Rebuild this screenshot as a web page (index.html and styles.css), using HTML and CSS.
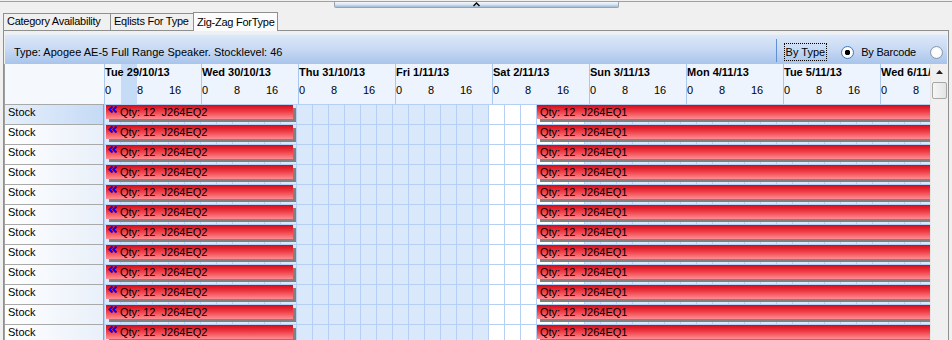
FILE: index.html
```html
<!DOCTYPE html>
<html lang="en">
<head>
    <meta charset="UTF-8">
    <title>Zig-Zag ForType</title>
    <link rel="stylesheet" href="styles.css">
</head>
<body>

    <div class="splitter">
        <div class="grip">
            <svg width="7" height="5" viewBox="0 0 7 5"><path d="M0.5 4 L3.5 1 L6.5 4" fill="none" stroke="#000" stroke-width="1.4"/></svg>
        </div>
    </div>

    <div class="tabs">
        <div class="tab tab-cat">Category Availability</div>
        <div class="tab tab-eq">Eqlists For Type</div>
        <div class="tab tab-zig active">Zig-Zag ForType</div>
    </div>

    <div class="panel">
        <div class="infobar">
            <span class="type">Type: Apogee AE-5 Full Range Speaker. Stocklevel: 46</span>
            <div class="modes">
                <span class="sep"></span>
                <span class="focus">By Type</span>
                <span class="radio on"></span>
                <span class="mode-label">By Barcode</span>
                <span class="radio"></span>
            </div>
        </div>

        <div class="chart">
            <div class="corner"></div>

            <div class="timehead">
                <div class="day now"><div class="date">Tue 29/10/13</div><div class="hours"><span>0</span><span>8</span><span>16</span></div></div>
                <div class="day"><div class="date">Wed 30/10/13</div><div class="hours"><span>0</span><span>8</span><span>16</span></div></div>
                <div class="day"><div class="date">Thu 31/10/13</div><div class="hours"><span>0</span><span>8</span><span>16</span></div></div>
                <div class="day"><div class="date">Fri 1/11/13</div><div class="hours"><span>0</span><span>8</span><span>16</span></div></div>
                <div class="day"><div class="date">Sat 2/11/13</div><div class="hours"><span>0</span><span>8</span><span>16</span></div></div>
                <div class="day"><div class="date">Sun 3/11/13</div><div class="hours"><span>0</span><span>8</span><span>16</span></div></div>
                <div class="day"><div class="date">Mon 4/11/13</div><div class="hours"><span>0</span><span>8</span><span>16</span></div></div>
                <div class="day"><div class="date">Tue 5/11/13</div><div class="hours"><span>0</span><span>8</span><span>16</span></div></div>
                <div class="day"><div class="date">Wed 6/11/13</div><div class="hours"><span>0</span><span>8</span><span>16</span></div></div>
            </div>

            <div class="vscroll">
                <div class="arrow">
                    <svg width="7" height="4" viewBox="0 0 7 4"><path d="M0 4 L3.5 0 L7 4 Z" fill="#222"/></svg>
                </div>
                <div class="thumb"></div>
            </div>

            <div class="rowheads">
                <div class="rowhead selected">Stock</div>
                <div class="rowhead">Stock</div>
                <div class="rowhead">Stock</div>
                <div class="rowhead">Stock</div>
                <div class="rowhead">Stock</div>
                <div class="rowhead">Stock</div>
                <div class="rowhead">Stock</div>
                <div class="rowhead">Stock</div>
                <div class="rowhead">Stock</div>
                <div class="rowhead">Stock</div>
                <div class="rowhead">Stock</div>
                <div class="rowhead">Stock</div>
            </div>

            <div class="rows" id="rows"></div>
        </div>
    </div>

    <script>
        // 12 identical stock rows, each with the two bookings
        var rows = document.getElementById("rows");
        var chevron = '<svg class="back" width="10" height="7" viewBox="0 0 10 7"><path d="M4.5 0.5 L1.5 3.5 L4.5 6.5 M8.5 0.5 L5.5 3.5 L8.5 6.5" fill="none" stroke="#0000ff" stroke-width="2"/></svg>';
        for (var i = 0; i < 12; i++) {
            var row = document.createElement("div");
            row.className = "row";
            row.innerHTML =
                '<div class="bar bar-first">' + chevron + '<span>Qty: 12  J264EQ2</span></div>' +
                '<div class="bar bar-second"><span>Qty: 12  J264EQ1</span></div>';
            rows.appendChild(row);
        }
    </script>
</body>
</html>
```

FILE: styles.css
```css
body {
    margin: 0;
    width: 952px;
    height: 340px;
    overflow: hidden;
    background: #f0f0f0;
    font-family: "Liberation Sans", Arial, sans-serif;
    font-size: 11px;
    color: #000;
}

/* splitter with the collapse grip */
.splitter {
    margin-top: 1px;
    border-top: 1px solid #a0a0a0;
    height: 9px;
    display: flex;
    justify-content: center;
}

.grip {
    width: 283px;
    height: 5px;
    border: 1px solid #9aa3ad;
    border-top: none;
    border-radius: 0 0 2px 2px;
    background: linear-gradient(#f6f9fc, #d6e4f1 50%, #9fbbd6);
    display: flex;
    justify-content: center;
    align-items: flex-start;
}

/* tabs */
.tabs {
    display: flex;
    align-items: flex-end;
    height: 19px;
    padding-left: 3px;
}

.tab {
    box-sizing: border-box;
    height: 17px;
    line-height: 15px;
    padding-left: 3px;
    border: 1px solid #8e8f8f;
    border-bottom: none;
    background: #f0f0f0;
    white-space: nowrap;
    overflow: hidden;
    letter-spacing: -0.25px;
}

.tab + .tab {
    margin-left: -1px;
}

.tab-cat { width: 108px; }
.tab-eq { width: 84px; }
.tab-zig { width: 85px; }

.tab.active {
    height: 19px;
    line-height: 19px;
    background: #fcfcfc;
    margin-bottom: -1px;
    position: relative;
    z-index: 1;
}

/* main panel */
.panel {
    margin: 0 3px;
    border: 1px solid #8e8f8f;
    height: 320px;
    overflow: hidden;
}

.infobar {
    margin: 3px 1px 0 1px;
    height: 30px;
    box-sizing: border-box;
    padding: 5px 4px 0 9px;
    display: flex;
    align-items: center;
    background: linear-gradient(#dde8f8, #c7d9f3 50%, #a8c4ec);
    border-top: 1px solid #e6eefa;
}

.modes {
    margin-left: auto;
    display: flex;
    align-items: center;
}

.sep {
    width: 1px;
    height: 23px;
    background: #5f8fd4;
    margin-top: -4px;
    margin-right: 7px;
}

.focus {
    box-sizing: border-box;
    height: 18px;
    line-height: 16px;
    padding: 0 1px;
    border: 1px dotted #000;
}

.mode-label {
    letter-spacing: -0.2px;
}

.radio {
    box-sizing: border-box;
    width: 13px;
    height: 13px;
    border: 1px solid #8a97a8;
    border-radius: 50%;
    background: radial-gradient(circle, #ffffff 40%, #e6e9ee);
    margin-left: 14px;
    margin-right: 7px;
}

.radio:last-child {
    margin-left: 14px;
    margin-right: 0;
}

.radio.on {
    border-color: #3d7fc0;
    background: radial-gradient(circle, #000 0 2.5px, #fff 3px 4px, #e6e9ee);
}

/* chart grid */
.chart {
    display: grid;
    grid-template-columns: 100px 826px 18px;
    grid-template-rows: 40px auto;
    height: 276px;
    overflow: hidden;
}

.corner {
    background: #f5f8fd;
    border-left: 1px solid #a0a0a0;
}

.timehead {
    display: flex;
    overflow: hidden;
    background: #eef4fd;
}

.day {
    flex: 0 0 96px;
    box-sizing: border-box;
    border-left: 1px solid #a9c7ef;
}

.day.now {
    background: linear-gradient(to right, transparent 16px, #c6dbf6 16px, #c6dbf6 32px, transparent 32px);
}

.date {
    height: 20px;
    line-height: 16px;
    font-weight: bold;
    white-space: nowrap;
}

.hours {
    display: flex;
    line-height: 13px;
}

.hours span {
    flex: 0 0 32px;
}

.vscroll {
    grid-row: 1 / 3;
    grid-column: 3;
    background: #f0f0f0;
    border-left: 1px solid #e6e6e6;
    display: flex;
    flex-direction: column;
    align-items: center;
}

.arrow {
    height: 15px;
    display: flex;
    align-items: center;
    justify-content: center;
    width: 100%;
}

.thumb {
    box-sizing: border-box;
    width: 15px;
    height: 17px;
    margin-top: 3px;
    border: 1px solid #a7a7a7;
    border-radius: 2px;
    background: linear-gradient(to right, #f6f6f6, #e3e3e3);
}

.rowheads {
    border-left: 1px solid #a0a0a0;
    border-right: 1px solid #a0a0a0;
    box-sizing: border-box;
}

.rowhead {
    box-sizing: border-box;
    height: 20px;
    line-height: 14px;
    padding-left: 3px;
    border-top: 1px solid #a9a9a9;
    background: linear-gradient(to right, #ffffff, #e9f0fa);
}

.rowhead.selected {
    background: linear-gradient(to right, #e6effb, #c5daf6);
}

.rows {
    background:
        repeating-linear-gradient(to bottom, #b5d0f4 0 1px, transparent 1px 20px),
        repeating-linear-gradient(to right, #b5d0f4 0 1px, transparent 1px 16px),
        linear-gradient(to right, transparent 17px, #c9ddf7 17px, #c9ddf7 32px, transparent 32px),
        linear-gradient(to right, #dae8fb 384px, #ffffff 384px, #ffffff 480px, #dae8fb 480px);
    overflow: hidden;
}

.row {
    height: 20px;
    display: flex;
    align-items: flex-start;
}

.bar {
    flex: none;
    height: 14px;
    margin-top: 1px;
    display: flex;
    align-items: flex-start;
    white-space: pre;
    line-height: 14px;
    background: linear-gradient(#d30a16, #ee3b45 45%, #ff8d93);
    box-shadow: 3px 3px 0 #808080;
}

.bar-first {
    margin-left: 2px;
    width: 187px;
}

.bar-second {
    margin-left: 244px;
    width: 500px;
    padding-left: 3px;
}

.back {
    margin: 1px 2px 0 2px;
}
```
